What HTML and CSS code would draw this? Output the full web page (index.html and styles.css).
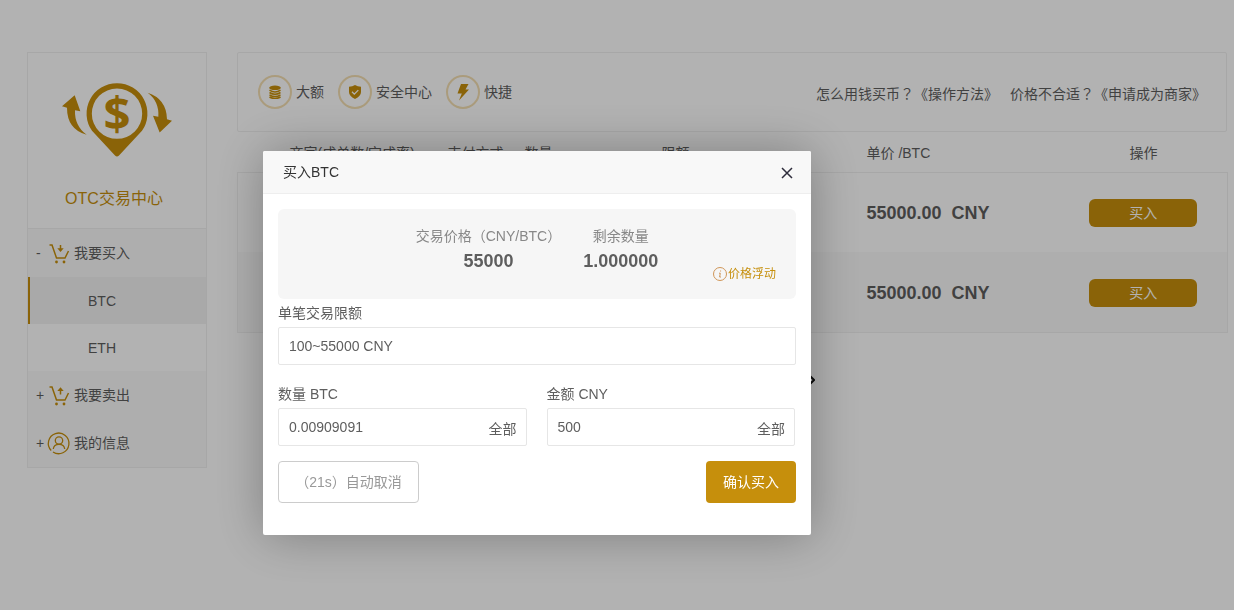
FILE: index.html
```html
<!DOCTYPE html>
<html lang="zh-CN">
<head>
<meta charset="utf-8">
<meta name="viewport" content="width=device-width, initial-scale=1">
<title>OTC交易中心</title>
<link rel="stylesheet" href="styles.css">
</head>
<body>
<div class="page">
  <aside class="sidebar">
    <div class="brand">
      <svg class="brand-logo" viewBox="21 23 330 221" aria-hidden="true">
        <path fill-rule="evenodd" d="M186 23A91 91 0 0 1 261 166L192 240Q186 246 180 240L111 166A91 91 0 0 1 186 23ZM186 39A75 75 0 1 0 186 190A75 75 0 1 0 186 39Z"/>
        <path d="M59 59L21 92L36 97Q36 162 95 178Q58 150 60 104L76 107Z"/>
        <path d="M278 52Q313 78 310 124L294 121L314 171L351 136L336 131Q334 70 278 52Z"/>
        <text x="186" y="165" text-anchor="middle" class="brand-sign">$</text>
      </svg>
      <div class="brand-name">OTC交易中心</div>
    </div>
    <nav class="menu">
      <a class="menu-head" href="#buy">
        <span class="menu-sign">-</span>
        <svg class="menu-icon" viewBox="0 0 22 22" aria-hidden="true"><path d="M1.500 3h2.500l4.500 13h8.500l3.500-7M12.500 3v4"/><path class="solid" d="M9.300 6.200h6.400L12.500 10Z"/><circle class="solid" cx="8.500" cy="20" r="1.400"/><circle class="solid" cx="16" cy="20" r="1.400"/></svg>
        <span>我要买入</span>
      </a>
      <a class="menu-item active" href="#btc">BTC</a>
      <a class="menu-item" href="#eth">ETH</a>
      <a class="menu-head" href="#sell">
        <span class="menu-sign">+</span>
        <svg class="menu-icon" viewBox="0 0 22 22" aria-hidden="true"><path d="M1.500 3h2.500l4.500 13h8.500l3.500-7M12.500 10.500v-4"/><path class="solid" d="M9.300 7h6.400L12.500 3.200Z"/><circle class="solid" cx="8.500" cy="20" r="1.400"/><circle class="solid" cx="16" cy="20" r="1.400"/></svg>
        <span>我要卖出</span>
      </a>
      <a class="menu-head" href="#me">
        <span class="menu-sign">+</span>
        <svg class="menu-icon user" viewBox="0 0 22 22" aria-hidden="true"><path d="M3.200 18.500A10.300 10.300 0 1 1 5 20"/><circle cx="11" cy="8.500" r="3.700"/><path d="M5.300 17q.5-4.700 5.700-4.700t5.700 4.700"/></svg>
        <span>我的信息</span>
      </a>
    </nav>
  </aside>

  <main class="main">
    <section class="topbar">
      <ul class="features">
        <li class="feature"><span class="feature-ring"><svg viewBox="0 0 14 14" aria-hidden="true"><ellipse cx="7" cy="2.800" rx="5.800" ry="2.300"/><path class="line" d="M1.500 5.200q5.500 3.500 11 0M1.500 7.500q5.500 3.500 11 0M1.500 9.800q5.500 3.500 11 0M1.500 12q5.500 3.200 11 0"/></svg></span>大额</li>
        <li class="feature"><span class="feature-ring"><svg viewBox="0 0 14 14" aria-hidden="true"><path d="M7 0Q9.500 1.800 13 1.800V7q0 4-6 7-6-3-6-7V1.800Q4.500 1.800 7 0Z"/><path class="tick" d="M4 6.800l2.300 2.300 4-4"/></svg></span>安全中心</li>
        <li class="feature"><span class="feature-ring"><svg class="bolt" viewBox="0 0 14 18" aria-hidden="true"><path d="M5 1h7.500L9.500 6.500H13L3 17.500 5.800 10.500H1.500Z"/></svg></span>快捷</li>
      </ul>
      <div class="helps">
        <a href="#how">怎么用钱买币<span class="mark" lang="zh-TW">？</span>《操作方法》</a>
        <a href="#apply">价格不合适<span class="mark" lang="zh-TW">？</span>《申请成为商家》</a>
      </div>
    </section>

    <table class="orders">
      <colgroup><col class="c-merchant"><col class="c-pay"><col class="c-amount"><col class="c-limit"><col class="c-price"><col></colgroup>
      <thead>
        <tr><th class="first">商家(成单数/完成率)</th><th>支付方式</th><th>数量</th><th>限额</th><th>单价 /BTC</th><th class="action">操作</th></tr>
      </thead>
      <tbody>
        <tr><td></td><td></td><td></td><td></td><td class="price">55000.00&nbsp; CNY</td><td class="action"><button type="button" class="buy">买入</button></td></tr>
        <tr><td></td><td></td><td></td><td></td><td class="price">55000.00&nbsp; CNY</td><td class="action"><button type="button" class="buy">买入</button></td></tr>
      </tbody>
    </table>

    <nav class="pager">
      <button type="button" class="pager-btn" aria-label="上一页"><svg viewBox="0 0 6 10" aria-hidden="true"><path d="M5 1L1 5l4 4"/></svg></button>
      <button type="button" class="pager-btn" aria-label="下一页"><svg viewBox="0 0 6 10" aria-hidden="true"><path d="M1 1l4 4-4 4"/></svg></button>
    </nav>
  </main>
</div>

<div class="shade"></div>
<div class="dialog" role="dialog" aria-labelledby="dialog-title">
  <header class="dialog-head">
    <h2 id="dialog-title">买入BTC</h2>
    <button type="button" class="close" aria-label="关闭"><svg viewBox="0 0 12 12" aria-hidden="true"><path d="M1 1l10 10M11 1L1 11"/></svg></button>
  </header>
  <form class="dialog-body">
    <div class="summary">
      <dl class="stats">
        <div><dt>交易价格<span class="mark" lang="zh-TW">（</span>CNY/BTC<span class="mark" lang="zh-TW">）</span></dt><dd>55000</dd></div>
        <div><dt>剩余数量</dt><dd>1.000000</dd></div>
      </dl>
      <span class="note"><svg viewBox="0 0 14 14" aria-hidden="true"><circle cx="7" cy="7" r="6.500"/><path d="M7.600 3.500v1M6 6.200h1.300L6.600 10H8"/></svg>价格浮动</span>
    </div>
    <label for="limit">单笔交易限额</label>
    <input id="limit" class="box" type="text" value="100~55000 CNY" readonly>
    <div class="pair">
      <div>
        <label for="qty">数量 BTC</label>
        <div class="box with-all"><input id="qty" type="text" value="0.00909091"><button type="button" class="all">全部</button></div>
      </div>
      <div>
        <label for="sum">金额 CNY</label>
        <div class="box with-all"><input id="sum" type="text" value="500"><button type="button" class="all">全部</button></div>
      </div>
    </div>
    <div class="actions">
      <button type="button" class="cancel"><span class="mark" lang="zh-TW">（</span>21s<span class="mark" lang="zh-TW">）</span>自动取消</button>
      <button type="button" class="confirm">确认买入</button>
    </div>
  </form>
</div>
</body>
</html>
```

FILE: styles.css
```css
* {
  box-sizing: border-box;
}

body,
button,
input {
  font-family: "Liberation Sans", "Noto Sans CJK SC", sans-serif;
  font-size: 14px;
  color: #5e5e5e;
}

body {
  margin: 0;
  line-height: 24px;
  background: #fff;
}

button {
  padding: 0;
  border: 0;
  background: none;
  cursor: pointer;
}

a {
  color: inherit;
  text-decoration: none;
}

/* Full-width marks centred in their box */
.mark {
  font-family: "Noto Sans CJK TC", sans-serif;
  line-height: 1;
}

.page {
  display: flex;
  align-items: flex-start;
  gap: 30px;
  padding: 52px 6px 0 27px;
}

/* Sidebar */
.sidebar {
  flex: 0 0 180px;
  border: 1px solid #f0f0f0;
}

.brand {
  display: flex;
  flex-direction: column;
  align-items: center;
  padding: 30px 6px 17px 0;
  border-bottom: 1px solid #f0f0f0;
}

.brand-logo {
  width: 110px;
  height: 74px;
  margin-left: 6px;
  overflow: visible;
  fill: #c68f0c;
}

.brand-sign {
  font: 700 142px "Open Sans", sans-serif;
}

.brand-name {
  margin-top: 30px;
  font-size: 16px;
  color: #c68f0c;
}

.menu-head,
.menu-item {
  display: flex;
  align-items: center;
}

.menu-head {
  gap: 4px;
  height: 48px;
  padding-left: 8px;
  background: #fafafa;
}

.menu-sign {
  width: 8px;
}

.menu-icon {
  width: 22px;
  height: 22px;
  overflow: visible;
  fill: none;
  stroke: #c68f0c;
  stroke-width: 1.5;
}

.menu-icon.user {
  stroke-width: 1.3;
}

.menu-icon .solid {
  fill: #c68f0c;
  stroke: none;
}

.menu-item {
  height: 47px;
  padding-left: 60px;
}

.menu-item.active {
  padding-left: 58px;
  border-left: 2px solid #c68f0c;
  background: #f3f3f3;
}

/* Main column */
.main {
  flex: 1;
  min-width: 0;
}

.topbar {
  display: flex;
  align-items: center;
  justify-content: space-between;
  height: 80px;
  margin-right: 1px;
  padding: 0 20px;
  border: 1px solid #f0f0f0;
  border-radius: 2px;
}

.features,
.feature,
.helps {
  display: flex;
  align-items: center;
}

.features {
  gap: 14px;
  margin: 0;
  padding: 0;
  list-style: none;
}

.feature {
  gap: 4px;
}

.feature-ring {
  display: flex;
  align-items: center;
  justify-content: center;
  width: 34px;
  height: 34px;
  border: 2px solid #f4dfb2;
  border-radius: 50%;
}

.feature-ring svg {
  width: 14px;
  height: 14px;
  fill: #c68f0c;
}

.feature-ring .bolt {
  height: 18px;
}

.feature-ring .line {
  fill: none;
  stroke: #c68f0c;
  stroke-width: 1.5;
}

.feature-ring .tick {
  fill: none;
  stroke: #fff;
  stroke-width: 1.3;
}

.helps {
  gap: 12px;
  padding-top: 4px;
}

.orders {
  width: 100%;
  table-layout: fixed;
  border-collapse: collapse;
}

.c-merchant {
  width: 210px;
}

.c-pay {
  width: 77px;
}

.c-amount {
  width: 137px;
}

.c-limit {
  width: 205px;
}

.c-price {
  width: 197px;
}

.orders th,
.orders td {
  padding: 2px 0 0;
  text-align: left;
}

.orders th {
  height: 40px;
  font-weight: normal;
  white-space: nowrap;
}

.orders .first {
  padding-left: 52px;
}

.orders .action {
  padding-right: 4px;
  text-align: center;
}

.orders tbody {
  border: 1px solid #f0f0f0;
}

.orders tbody tr {
  height: 80px;
}

.orders tbody tr:nth-child(even) {
  background: #fafafa;
}

.orders .price {
  font-size: 18px;
  font-weight: bold;
}

.buy {
  width: 108px;
  height: 28px;
  padding-bottom: 2px;
  border-radius: 6px;
  background: #c68f0c;
  color: #fff;
}

.pager {
  display: flex;
  justify-content: space-between;
  width: 164px;
  margin: 35px auto 0;
}

.pager-btn {
  display: flex;
  align-items: center;
  height: 24px;
}

.pager-btn svg {
  width: 6px;
  height: 10px;
  fill: none;
  stroke: #111;
  stroke-width: 2;
}

/* Dialog */
.shade {
  position: fixed;
  inset: 0;
  background: rgba(0, 0, 0, 0.3);
}

.dialog {
  position: fixed;
  top: 151px;
  left: 263px;
  width: 548px;
  border-radius: 2px;
  background: #fff;
  box-shadow: 1px 1px 50px rgba(0, 0, 0, 0.3);
}

.dialog-head {
  display: flex;
  align-items: center;
  justify-content: space-between;
  height: 43px;
  padding: 0 18px 0 20px;
  border-bottom: 1px solid #eee;
  border-radius: 2px 2px 0 0;
  background: #f8f8f8;
}

.dialog-head h2 {
  margin: 0;
  font-size: 14px;
  font-weight: normal;
  color: #333;
}

.close {
  padding-top: 2px;
}

.close svg {
  display: block;
  width: 12px;
  height: 12px;
  stroke: #2e2d3c;
  stroke-width: 1.5;
}

.dialog-body {
  padding: 15px 15px 32px;
}

.summary {
  display: grid;
  grid-template-columns: 1fr auto 1fr;
  height: 90px;
  padding: 15px 20px 17px;
  border-radius: 6px;
  background: #f6f6f6;
}

.stats {
  display: flex;
  grid-column: 2;
  gap: 22px;
  margin: 0;
  text-align: center;
}

.stats dt {
  color: #888;
}

.stats dd {
  margin: 0;
  font-size: 18px;
  font-weight: bold;
  line-height: 26px;
}

.note {
  display: flex;
  align-items: center;
  align-self: end;
  justify-self: end;
  gap: 1px;
  font-size: 12px;
  line-height: 16px;
  color: #c68f0c;
}

.note svg {
  width: 14px;
  height: 14px;
  fill: none;
  stroke: #cf9658;
}

.dialog-body label {
  display: block;
  line-height: 28px;
}

.box {
  display: block;
  width: 100%;
  height: 38px;
  padding: 0 10px;
  border: 1px solid #e6e6e6;
  border-radius: 2px;
  background: #fff;
}

.pair {
  display: grid;
  grid-template-columns: 1fr 1fr;
  gap: 20px;
  margin: 15px 1px 0 0;
}

.with-all {
  display: flex;
  align-items: center;
  padding-right: 9px;
}

.with-all input {
  flex: 1;
  min-width: 0;
  padding: 0;
  border: 0;
  outline: 0;
}

.all {
  padding-top: 2px;
}

.actions {
  display: flex;
  justify-content: space-between;
  margin-top: 15px;
}

.cancel,
.confirm {
  height: 42px;
  padding-bottom: 2px;
  border-radius: 4px;
}

.cancel {
  width: 141px;
  border: 1px solid #ccc;
  color: #999;
}

.confirm {
  width: 90px;
  background: #c68f0c;
  color: #fff;
}
```
